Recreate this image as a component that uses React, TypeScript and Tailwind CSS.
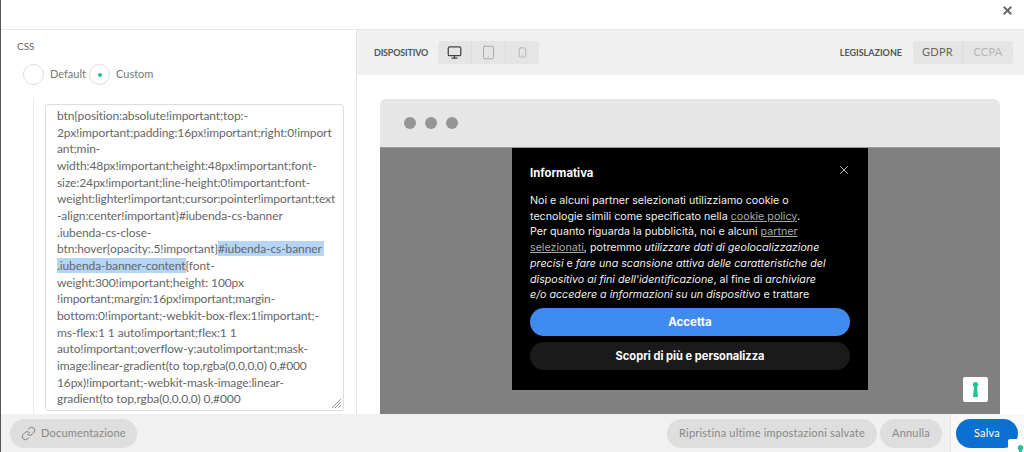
import React from "react";
import { Monitor, Tablet, Smartphone, Link, X } from "lucide-react";

const lines: React.ReactNode[] = [
  "btn{position:absolute!important;top:-",
  "2px!important;padding:16px!important;right:0!import",
  "ant;min-",
  "width:48px!important;height:48px!important;font-",
  "size:24px!important;line-height:0!important;font-",
  "weight:lighter!important;cursor:pointer!important;text",
  "-align:center!important}#iubenda-cs-banner",
  ".iubenda-cs-close-",
  <>btn:hover{"{"}opacity:.5!important{"}"}<span className="bg-[#b4d5f5]">#iubenda-cs-banner </span></>,
  <><span className="bg-[#b4d5f5]">.iubenda-banner-content</span>{"{"}font-</>,
  "weight:300!important;height: 100px",
  "!important;margin:16px!important;margin-",
  "bottom:0!important;-webkit-box-flex:1!important;-",
  "ms-flex:1 1 auto!important;flex:1 1",
  "auto!important;overflow-y:auto!important;mask-",
  "image:linear-gradient(to top,rgba(0,0,0,0) 0,#000",
  "16px)!important;-webkit-mask-image:linear-",
  "gradient(to top,rgba(0,0,0,0) 0,#000",
];

function Key() {
  return (
    <svg width="7" height="15" viewBox="0 0 7 15">
      <path d="M3.5 0a2.7 2.7 0 0 1 1.5 5l1 10H1L2 5A2.7 2.7 0 0 1 3.5 0z" fill="#1cc691" />
    </svg>
  );
}

export default function App() {
  return (
    <div className="w-[1024px] h-[452px] overflow-hidden flex flex-col bg-white border-l border-[#555] relative font-['Lato',sans-serif] text-[#666]">
      <div className="h-[30px] shrink-0 flex items-start justify-end pr-[10px] pt-[4px] border-b border-[#e8e8e8]">
        <X size={13} strokeWidth={3.5} className="text-[#666]" />
      </div>
      <div className="flex-1 min-h-0 flex">
        <div className="w-[356px] shrink-0 border-r border-[#e5e5e5] pl-[16px] flex flex-col overflow-hidden">
          <div className="text-[10px] leading-[12px] mt-[10px]">CSS</div>
          <div className="flex items-center mt-[12px] ml-[6px] h-[21px] text-[11px] text-[#777]">
            <span className="w-[21px] h-[21px] rounded-full border border-[#ddd]" />
            <span className="ml-[6px]">Default</span>
            <span className="ml-[3px] w-[21px] h-[21px] rounded-full border border-[#ddd] flex items-center justify-center">
              <span className="w-[4px] h-[4px] rounded-full bg-[#1cc691]" />
            </span>
            <span className="ml-[6px]">Custom</span>
          </div>
          <div className="ml-[16px] mt-[13px] pl-[11px] border-l border-[#eee] flex-1 min-h-0">
            <div className="w-[299px] h-[307px] mt-[6px] relative overflow-hidden rounded-[3px] border border-[#ddd] pl-[11px] pt-[3px] text-[12px] tracking-[-0.1px] leading-[16.67px] text-[#666] whitespace-pre">
              {lines.map((l, i) => (
                <div key={i}>{l}</div>
              ))}
              <svg className="absolute right-[1px] bottom-[1px]" width="11" height="11" viewBox="0 0 11 11" stroke="#999" strokeWidth="1">
                <path d="M1 10 10 1M4 10l6-6M7 10l3-3" />
              </svg>
            </div>
          </div>
        </div>
        <div className="flex-1 min-w-0 flex flex-col">
          <div className="h-[45px] shrink-0 bg-[#f0f0f0] flex items-center pl-[17px] pr-[11px]">
            <span className="text-[9px] tracking-[-0.2px] font-bold text-[#555]">DISPOSITIVO</span>
            <div className="ml-[10px] flex h-[23px] rounded-[3px] bg-[#e5e5e5] divide-x divide-[#dbdbdb]">
              <div className="w-[34px] flex items-center justify-center"><Monitor size={15} className="text-[#444]" /></div>
              <div className="w-[34px] flex items-center justify-center"><Tablet size={15} className="text-[#999]" strokeWidth={1.25} /></div>
              <div className="w-[33px] flex items-center justify-center"><Smartphone size={11} className="text-[#999]" strokeWidth={1.25} /></div>
            </div>
            <span className="ml-auto text-[9px] font-bold text-[#555]">LEGISLAZIONE</span>
            <div className="ml-[11px] flex h-[23px] rounded-[3px] bg-[#e5e5e5] divide-x divide-[#dbdbdb] text-[11px] tracking-[0.3px]">
              <div className="w-[50px] flex items-center justify-center text-[#666]">GDPR</div>
              <div className="w-[50px] flex items-center justify-center text-[#b5b5b5]">CCPA</div>
            </div>
          </div>
          <div className="flex-1 min-h-0 pl-[23px] pt-[24px]">
            <div className="w-[620px] h-full rounded-t-[6px] overflow-hidden flex flex-col">
              <div className="h-[48px] shrink-0 bg-[#e6e6e6] flex items-center gap-[9px] pl-[24px]">
                <span className="w-[12px] h-[12px] rounded-full bg-[#959595]" />
                <span className="w-[12px] h-[12px] rounded-full bg-[#959595]" />
                <span className="w-[12px] h-[12px] rounded-full bg-[#959595]" />
              </div>
              <div className="flex-1 bg-[#808080] relative flex justify-center items-start border-t border-[#999]">
                <div className="w-[356px] h-[242px] bg-black text-white px-[18px] pt-[18px] relative font-['Inter',sans-serif]">
                  <X size={14} strokeWidth={1.5} className="absolute top-[15px] right-[17px] text-[#ddd]" />
                  <div className="text-[11.3px] leading-[14px] font-bold">Informativa</div>
                  <div className="mt-[13px] h-[110px] overflow-hidden text-[10.7px] leading-[15.7px] text-[#f0f0f0] whitespace-nowrap">
                    <div>Noi e alcuni partner selezionati utilizziamo cookie o</div>
                    <div>tecnologie simili come specificato nella <span className="text-[#aaa] underline">cookie policy</span>.</div>
                    <div>Per quanto riguarda la pubblicità, noi e alcuni <span className="text-[#aaa] underline">partner</span></div>
                    <div><span className="text-[#aaa] underline">selezionati</span>, potremmo <i>utilizzare dati di geolocalizzazione</i></div>
                    <div><i>precisi</i> e <i>fare una scansione attiva delle caratteristiche del</i></div>
                    <div><i>dispositivo ai fini dell'identificazione</i>, al fine di <i>archiviare</i></div>
                    <div><i>e/o accedere a informazioni su un dispositivo</i> e trattare</div>
                  </div>
                  <div className="mt-[5px] h-[28px] pt-[1px] rounded-full bg-[#408bf0] flex items-center justify-center text-[11.5px] font-bold">Accetta</div>
                  <div className="mt-[6px] h-[28px] pt-[1px] rounded-full bg-[#1a1a1a] flex items-center justify-center text-[11.1px] font-bold">Scopri di più e personalizza</div>
                </div>
                <div className="absolute right-[12px] bottom-[12px] w-[25px] h-[25px] rounded-[2px] bg-white flex items-center justify-center">
                  <Key />
                </div>
              </div>
            </div>
          </div>
        </div>
      </div>
      <div className="h-[38px] shrink-0 bg-[#f1f1f1] flex items-center pl-[9px] text-[11px] tracking-[0.2px] text-[#888]">
        <div className="h-[29px] w-[127px] pl-[11px] rounded-full bg-[#dedede] flex items-center gap-[5px]">
          <Link size={15} className="text-[#777]" strokeWidth={1.5} />
          <span>Documentazione</span>
        </div>
        <div className="ml-auto h-[29px] w-[210px] rounded-full bg-[#dedede] flex items-center justify-center">Ripristina ultime impostazioni salvate</div>
        <div className="ml-[3px] h-[29px] w-[62px] rounded-full bg-[#dedede] flex items-center justify-center">Annulla</div>
        <div className="w-[74px] h-full ml-[8px] border-l border-[#e6e6e6] bg-[#f8f8f8] pl-[5px] flex items-center">
          <div className="h-[29px] w-[62px] rounded-full bg-[#0a70d2] text-white flex items-center justify-center">Salva</div>
        </div>
      </div>
      <div className="absolute left-[1007px] top-[439px] w-[25px] h-[25px] rounded-[2px] bg-white flex justify-center pt-[6px]">
        <Key />
      </div>
    </div>
  );
}
